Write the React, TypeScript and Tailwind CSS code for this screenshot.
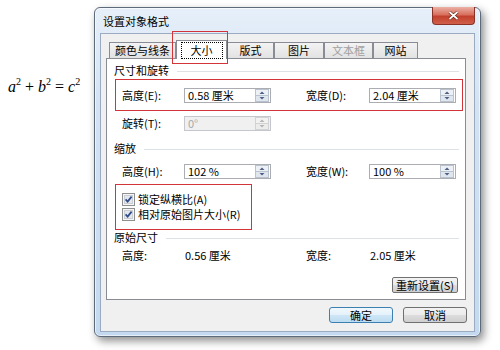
import React from "react";

const ui = "font-['Noto_Sans_CJK_SC',sans-serif] text-[11px] leading-[13px] text-black";

// spin box with up/down arrows
const Spinner = ({ value, disabled = false }: { value: string; disabled?: boolean }) => (
  <div
    className={
      disabled
        ? "flex h-[15px] w-[87px] items-center border border-[#c4c8ce] bg-[#f0f0f0] text-[#a8a8a8]"
        : "flex h-[15px] w-[87px] items-center border border-[#abadb3] bg-white text-black"
    }
  >
    <span className="flex-1 whitespace-nowrap pl-[3px]">{value}</span>
    <svg width="14" height="13" viewBox="0 0 14 13" className="mr-px">
      <rect x="0.5" y="0.5" width="13" height="6" fill={disabled ? "#f2f2f2" : "#edf1f6"} stroke={disabled ? "#d2d2d2" : "#b9c3d0"} />
      <rect x="0.5" y="6.5" width="13" height="6" fill={disabled ? "#ececec" : "#dfe6ee"} stroke={disabled ? "#d2d2d2" : "#b9c3d0"} />
      <polygon points="4.5,5 9.5,5 7,2.5" fill={disabled ? "#b4b4b4" : "#4d5f84"} />
      <polygon points="4.5,8 9.5,8 7,10.5" fill={disabled ? "#b4b4b4" : "#4d5f84"} />
    </svg>
  </div>
);

const Check = () => (
  <svg width="13" height="13" viewBox="0 0 13 13" className="shrink-0">
    <rect x="0.5" y="0.5" width="12" height="12" fill="#f6f6f6" stroke="#8e8f8f" />
    <rect x="2.5" y="2.5" width="8" height="8" fill="#e4e7eb" stroke="#c9ced5" />
    <path d="M3.6 6.4 L5.6 8.6 L9.6 3.6" stroke="#2f4b8a" strokeWidth="1.7" fill="none" />
  </svg>
);

const Header = ({ title }: { title: string }) => (
  <div className="flex h-[14px] items-center gap-[8px] pl-[7px] pr-[6px]">
    <span>{title}</span>
    <div className="mt-[3px] h-px flex-1 bg-[#dde2e7]" />
  </div>
);

const Tab = ({ label, dim = false, w }: { label: string; dim?: boolean; w: string }) => (
  <div
    className={`flex h-[16px] items-center justify-center border border-b-0 border-[#898c95] bg-[linear-gradient(#f3f3f3,#e2e2e2)] ${w} ${
      dim ? "text-[#a0a0a0]" : "text-black"
    }`}
  >
    {label}
  </div>
);

const App = () => {
  return (
    <div className={`relative flex h-[350px] w-[500px] bg-white ${ui}`}>
      {/* formula on the page */}
      <div className="w-[94px] shrink-0 pl-[8px] pt-[77px] font-['Liberation_Serif',serif] text-[16px] leading-[20px]">
        <i>a</i>
        <sup className="top-[-0.7em] text-[10px]">2</sup> + <i>b</i>
        <sup className="top-[-0.7em] text-[10px]">2</sup> = <i>c</i>
        <sup className="top-[-0.7em] text-[10px]">2</sup>
      </div>

      {/* dialog window */}
      <div className="relative mt-[7px] flex h-[330px] w-[387px] flex-col rounded-[6px] border border-[#5d6a7a] bg-[linear-gradient(#e6eff9,#d3e3f4_30%,#c4d9ef)] shadow-[3px_4px_9px_rgba(0,0,0,0.45),inset_0_0_0_1px_rgba(255,255,255,0.6)]">
        <div className="flex h-[25px] items-center pl-[8px] pt-[1px]">设置对象格式</div>

        <div className="absolute right-[5px] top-[-1px] flex h-[18px] w-[43px] items-center justify-center rounded-b-[4px] border border-t-0 border-[#8a3226] bg-[linear-gradient(#eab0a4,#d8705e_45%,#c2402c_55%,#d0604a)]">
          <svg width="11" height="9" viewBox="0 0 11 9">
            <path d="M1.5 1 L9.5 8 M9.5 1 L1.5 8" stroke="#5a2018" strokeWidth="3" />
            <path d="M1.5 1 L9.5 8 M9.5 1 L1.5 8" stroke="#ffffff" strokeWidth="1.7" />
          </svg>
        </div>

        {/* client area */}
        <div className="mx-[5px] flex h-[299px] flex-col border border-[#9aabc1] bg-[#f0f0f0]">
          {/* tabs */}
          <div className="ml-[8px] mt-[6px] flex h-[18px] items-end">
            <Tab label="颜色与线条" w="w-[67px]" />
            <div className="relative z-10 -mb-px flex h-[19px] w-[51px] items-center justify-center border border-b-0 border-[#898c95] bg-white">
              <span className="border border-dotted border-black px-[9px] py-px">大小</span>
            </div>
            <Tab label="版式" w="w-[47px]" />
            <Tab label="图片" w="w-[50px]" />
            <Tab label="文本框" w="w-[49px]" dim />
            <Tab label="网站" w="w-[45px]" />
          </div>

          {/* tab panel */}
          <div className="ml-[5px] flex h-[242px] w-[360px] flex-col border border-[#898c95] bg-white">
            <div className="mt-[4px]">
              <Header title="尺寸和旋转" />
            </div>

            <div className="ml-[8px] mr-[2px] mt-[2px] flex h-[32px] items-center border border-[#d2343a] pl-[6px]">
              <span className="w-[62px]">高度(E):</span>
              <Spinner value="0.58 厘米" />
              <span className="ml-[35px] w-[63px]">宽度(D):</span>
              <Spinner value="2.04 厘米" />
            </div>

            <div className="mt-[5px] flex h-[15px] items-center pl-[15px]">
              <span className="w-[62px]">旋转(T):</span>
              <Spinner value="0°" disabled />
            </div>

            <div className="mt-[10px]">
              <Header title="缩放" />
            </div>

            <div className="mt-[9px] flex h-[15px] items-center pl-[15px]">
              <span className="w-[62px]">高度(H):</span>
              <Spinner value="102 %" />
              <span className="ml-[35px] w-[63px]">宽度(W):</span>
              <Spinner value="100 %" />
            </div>

            <div className="ml-[8px] mt-[5px] flex h-[46px] w-[137px] flex-col border border-[#d2343a] pl-[6px] pt-[7px]">
              <div className="flex h-[15px] items-center gap-[3px]">
                <Check />
                <span>锁定纵横比(A)</span>
              </div>
              <div className="flex h-[15px] items-center gap-[3px]">
                <Check />
                <span>相对原始图片大小(R)</span>
              </div>
            </div>

            <Header title="原始尺寸" />

            <div className="mt-[4px] flex h-[15px] items-center pl-[15px]">
              <span className="w-[62px]">高度:</span>
              <span className="w-[87px] pl-px">0.56 厘米</span>
              <span className="ml-[35px] w-[63px]">宽度:</span>
              <span className="pl-px">2.05 厘米</span>
            </div>

            <div className="mt-[14px] flex justify-end pr-[7px]">
              <button className="h-[16px] w-[66px] rounded-[2px] border border-[#707070] bg-[linear-gradient(#f2f2f2_0%,#ebebeb_50%,#dddddd_51%,#cfcfcf_100%)] leading-[12px]">
                重新设置(S)
              </button>
            </div>
          </div>

          {/* dialog buttons */}
          <div className="mr-[7px] mt-[7px] flex justify-end gap-[10px]">
            <button className="h-[16px] w-[64px] rounded-[3px] border border-[#3c7fb1] bg-[linear-gradient(#f1f8fd_0%,#e3f1fb_50%,#cfe6f6_51%,#bcdcf1_100%)] leading-[12px]">
              确定
            </button>
            <button className="h-[16px] w-[64px] rounded-[3px] border border-[#707070] bg-[linear-gradient(#f2f2f2_0%,#ebebeb_50%,#dddddd_51%,#cfcfcf_100%)] leading-[12px]">
              取消
            </button>
          </div>
        </div>
      </div>

      {/* annotation around the selected tab */}
      <div className="absolute left-[172px] top-[31px] z-20 h-[33px] w-[56px] border border-[#d2343a]" />
    </div>
  );
};

export default App;
